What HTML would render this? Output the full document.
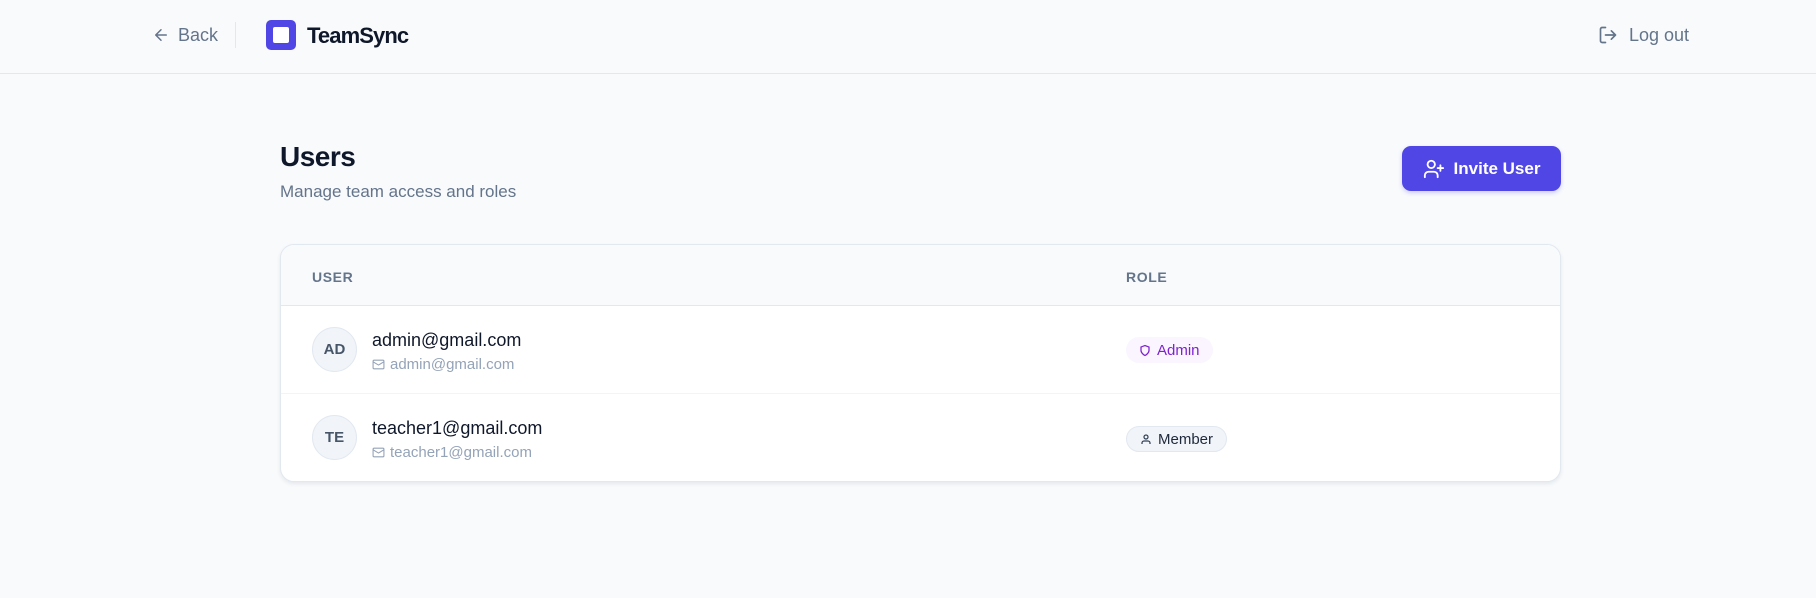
<!DOCTYPE html>
<html><head><style>
*{box-sizing:border-box;margin:0;padding:0}
body{width:1816px;height:598px;background:#f8fafc;font-family:"Liberation Sans",sans-serif;position:relative;overflow:hidden}
.hdr{position:absolute;left:0;top:0;width:1816px;height:74px;border-bottom:1px solid #e2e8f0}
.abs{position:absolute}
.card{position:absolute;left:280px;top:244px;width:1281px;height:238px;background:#fff;border:1px solid #e2e8f0;border-radius:14px;overflow:hidden;box-shadow:0 2px 4px rgba(15,23,42,.08)}
.th{position:absolute;left:0;top:0;width:100%;height:61px;background:#f8fafc;border-bottom:1px solid #e2e8f0}
.th span{position:absolute;top:24px;font-size:14px;font-weight:bold;color:#64748b;letter-spacing:.6px}
.row{position:absolute;left:0;width:100%;height:88px}
.av{position:absolute;left:31px;width:45px;height:45px;border-radius:50%;background:#f1f5f9;border:1px solid #e2e8f0;color:#475569;font-size:15px;font-weight:bold;text-align:center;line-height:43px}
.nm{position:absolute;left:91px;font-size:18px;color:#0f172a}
.em{position:absolute;left:91px;font-size:15px;color:#94a3b8;display:flex;align-items:center;gap:5px}
.badge{position:absolute;left:845px;height:26px;border-radius:13px;font-size:15px;display:flex;align-items:center;gap:6px;padding:0 13px}
</style></head><body>
<div class="hdr"></div>
<svg class="abs" style="left:152px;top:26px" width="18" height="18" viewBox="0 0 24 24" fill="none" stroke="#64748b" stroke-width="2" stroke-linecap="round" stroke-linejoin="round"><path d="M19 12H5M12 19l-7-7 7-7"/></svg>
<div class="abs" style="left:178px;top:25px;font-size:18px;color:#64748b">Back</div>
<div class="abs" style="left:235px;top:22px;width:1px;height:26px;background:#e2e8f0"></div>
<div class="abs" style="left:266px;top:20px;width:30px;height:30px;border-radius:5px;background:#4f46e5"></div>
<div class="abs" style="left:273px;top:27px;width:16px;height:16px;border-radius:2px;background:#fff"></div>
<div class="abs" style="left:307px;top:23px;font-size:22px;font-weight:bold;color:#0f172a;letter-spacing:-.9px">TeamSync</div>
<svg class="abs" style="left:1598px;top:25px" width="20" height="20" viewBox="0 0 24 24" fill="none" stroke="#64748b" stroke-width="2" stroke-linecap="round" stroke-linejoin="round"><path d="M9 21H5a2 2 0 0 1-2-2V5a2 2 0 0 1 2-2h4"/><path d="M16 17l5-5-5-5M21 12H9"/></svg>
<div class="abs" style="left:1629px;top:25px;font-size:18px;color:#64748b">Log out</div>
<div class="abs" style="left:280px;top:141px;font-size:28px;font-weight:bold;color:#0f172a;letter-spacing:-.5px">Users</div>
<div class="abs" style="left:280px;top:182px;font-size:17px;color:#64748b">Manage team access and roles</div>
<div class="abs" style="left:1402px;top:146px;width:159px;height:45px;border-radius:9px;background:#4f46e5;box-shadow:0 2px 4px rgba(79,70,229,.25);display:flex;align-items:center;justify-content:center;gap:9px;color:#fff;font-size:17px;font-weight:bold">
<svg width="22" height="22" viewBox="0 0 24 24" fill="none" stroke="#fff" stroke-width="2" stroke-linecap="round" stroke-linejoin="round"><path d="M16 21v-2a4 4 0 0 0-4-4H6a4 4 0 0 0-4 4v2"/><circle cx="9" cy="7" r="4"/><path d="M19 8v6M22 11h-6"/></svg>Invite User</div>
<div class="card">
<div class="th"><span style="left:31px">USER</span><span style="left:845px">ROLE</span></div>
<div class="row" style="top:61px;border-bottom:1px solid #f1f5f9">
<div class="av" style="top:21px">AD</div>
<div class="nm" style="top:24px">admin@gmail.com</div>
<div class="em" style="top:50px"><svg width="13" height="13" viewBox="0 0 24 24" fill="none" stroke="#94a3b8" stroke-width="2"><rect x="2" y="4" width="20" height="16" rx="2"/><path d="M22 7l-10 6L2 7"/></svg>admin@gmail.com</div>
<div class="badge" style="top:31px;background:#faf5ff;color:#7e22ce"><svg width="12" height="13" viewBox="0 0 24 24" fill="none" stroke="#7e22ce" stroke-width="2.5"><path d="M12 22s8-4 8-10V5l-8-3-8 3v7c0 6 8 10 8 10z"/></svg>Admin</div>
</div>
<div class="row" style="top:149px">
<div class="av" style="top:21px">TE</div>
<div class="nm" style="top:24px">teacher1@gmail.com</div>
<div class="em" style="top:50px"><svg width="13" height="13" viewBox="0 0 24 24" fill="none" stroke="#94a3b8" stroke-width="2"><rect x="2" y="4" width="20" height="16" rx="2"/><path d="M22 7l-10 6L2 7"/></svg>teacher1@gmail.com</div>
<div class="badge" style="top:32px;background:#f1f5f9;border:1px solid #e2e8f0;color:#1e293b"><svg width="12" height="13" viewBox="0 0 24 24" fill="none" stroke="#334155" stroke-width="2.5"><circle cx="12" cy="7" r="4"/><path d="M20 21v-2a4 4 0 0 0-4-4H8a4 4 0 0 0-4 4v2"/></svg>Member</div>
</div>
</div>
</body></html>
